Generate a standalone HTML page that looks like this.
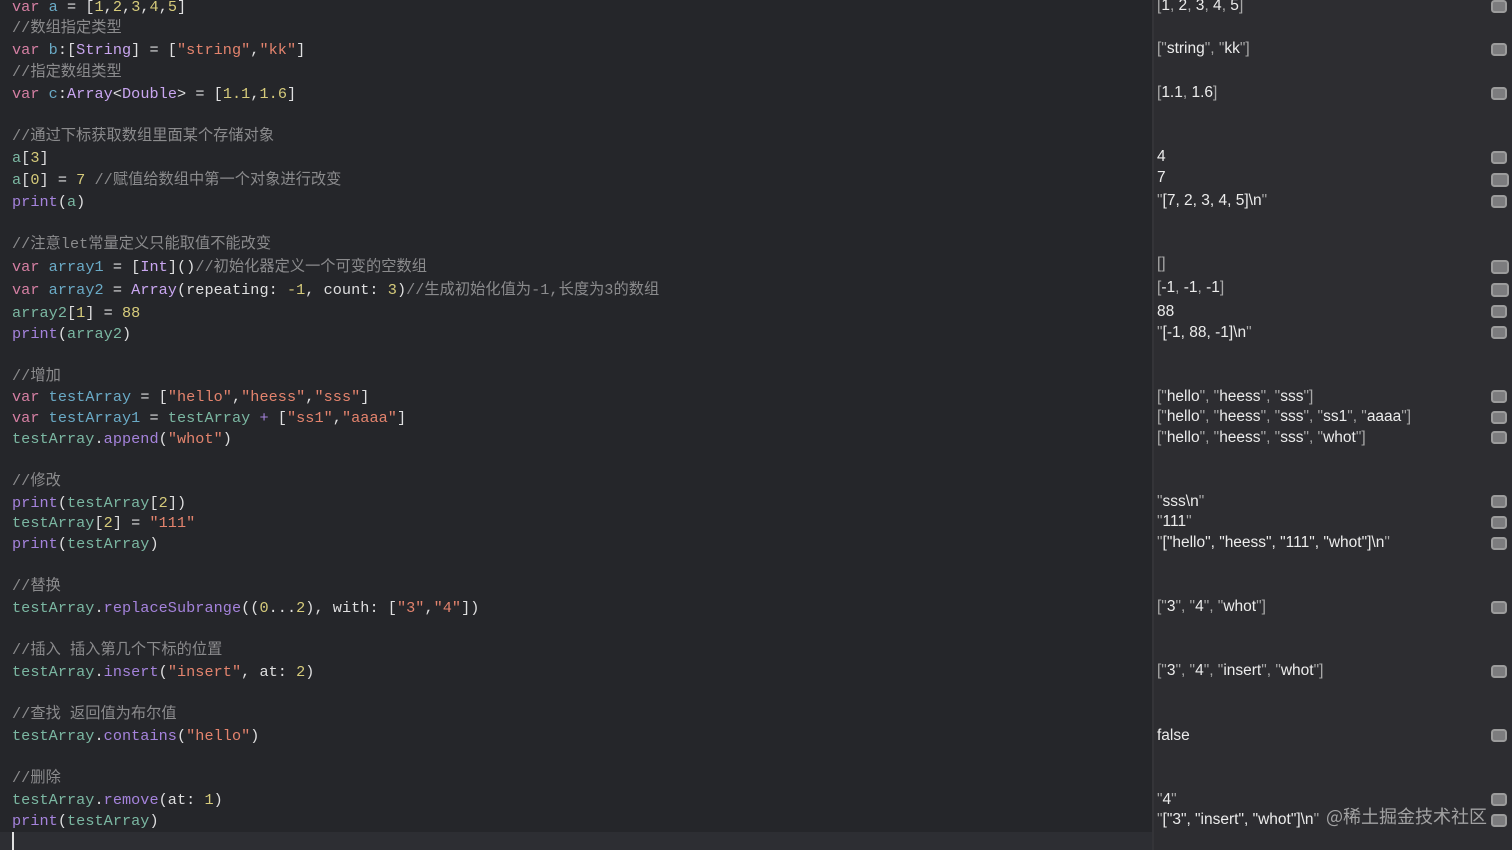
<!DOCTYPE html>
<html><head><meta charset="utf-8"><style>
html,body{margin:0;padding:0;width:1512px;height:850px;overflow:hidden;background:#25262a;}
#code{position:absolute;left:0;top:0;width:1152px;height:850px;background:#25262a;}
#cur{position:absolute;left:0;top:832px;width:1152px;height:18px;background:#2d2e33;}
#caret{position:absolute;left:12px;top:832px;width:1.5px;height:18px;background:#e0e0e0;}
#sep{position:absolute;left:1152px;top:0;width:2px;height:850px;background:#343438;}
#res{position:absolute;left:1154px;top:0;width:358px;height:850px;background:#2d2d31;}
.l{position:absolute;left:12px;height:22px;line-height:22px;white-space:pre;font-family:"Liberation Mono","Noto Sans CJK SC",monospace;font-size:15.2px;letter-spacing:0.05px;color:#dfdfe0;}
.c{color:#8b8b8d;}
.k{color:#d57fa3;}
.d{color:#6aaac6;}
.v{color:#7bb7a2;}
.m{color:#a583dc;}
.s{color:#e3836d;}
.n{color:#d6cb7b;}
.t{color:#c9a6f0;}
.r{position:absolute;left:1157px;height:22px;line-height:22px;white-space:pre;font-family:"Liberation Sans","Noto Sans CJK SC",sans-serif;font-size:15.5px;color:#ececec;}
.r i{font-style:normal;color:#a8a8a8;}
.ic{position:absolute;left:1491px;width:12px;height:9px;border:2px solid #9c9c9c;border-radius:3.5px;background:#7c7c7e;}
.wm{position:absolute;left:1326px;top:803px;font-family:"Noto Sans CJK SC",sans-serif;font-size:18px;color:rgba(200,200,200,0.75);white-space:pre;}
</style></head><body>
<div id="code"></div><div id="cur"></div><div id="caret"></div><div id="sep"></div><div id="res"></div>

<div class="l" style="top:-4px"><span class="k">var</span> <span class="d">a</span> = [<span class="n">1</span>,<span class="n">2</span>,<span class="n">3</span>,<span class="n">4</span>,<span class="n">5</span>]</div>
<div class="l c" style="top:17px">//数组指定类型</div>
<div class="l" style="top:39px"><span class="k">var</span> <span class="d">b</span>:[<span class="t">String</span>] = [<span class="s">"string"</span>,<span class="s">"kk"</span>]</div>
<div class="l c" style="top:61px">//指定数组类型</div>
<div class="l" style="top:83px"><span class="k">var</span> <span class="d">c</span>:<span class="t">Array</span>&lt;<span class="t">Double</span>&gt; = [<span class="n">1.1</span>,<span class="n">1.6</span>]</div>
<div class="l c" style="top:125px">//通过下标获取数组里面某个存储对象</div>
<div class="l" style="top:147px"><span class="v">a</span>[<span class="n">3</span>]</div>
<div class="l" style="top:169px"><span class="v">a</span>[<span class="n">0</span>] = <span class="n">7</span> <span class="c">//赋值给数组中第一个对象进行改变</span></div>
<div class="l" style="top:191px"><span class="m">print</span>(<span class="v">a</span>)</div>
<div class="l c" style="top:233px">//注意let常量定义只能取值不能改变</div>
<div class="l" style="top:256px"><span class="k">var</span> <span class="d">array1</span> = [<span class="t">Int</span>]()<span class="c">//初始化器定义一个可变的空数组</span></div>
<div class="l" style="top:279px"><span class="k">var</span> <span class="d">array2</span> = <span class="t">Array</span>(repeating: <span class="n">-1</span>, count: <span class="n">3</span>)<span class="c">//生成初始化值为-1,长度为3的数组</span></div>
<div class="l" style="top:302px"><span class="v">array2</span>[<span class="n">1</span>] = <span class="n">88</span></div>
<div class="l" style="top:323px"><span class="m">print</span>(<span class="v">array2</span>)</div>
<div class="l c" style="top:365px">//增加</div>
<div class="l" style="top:386px"><span class="k">var</span> <span class="d">testArray</span> = [<span class="s">"hello"</span>,<span class="s">"heess"</span>,<span class="s">"sss"</span>]</div>
<div class="l" style="top:407px"><span class="k">var</span> <span class="d">testArray1</span> = <span class="v">testArray</span> <span class="m">+</span> [<span class="s">"ss1"</span>,<span class="s">"aaaa"</span>]</div>
<div class="l" style="top:428px"><span class="v">testArray</span>.<span class="m">append</span>(<span class="s">"whot"</span>)</div>
<div class="l c" style="top:470px">//修改</div>
<div class="l" style="top:492px"><span class="m">print</span>(<span class="v">testArray</span>[<span class="n">2</span>])</div>
<div class="l" style="top:512px"><span class="v">testArray</span>[<span class="n">2</span>] = <span class="s">"111"</span></div>
<div class="l" style="top:533px"><span class="m">print</span>(<span class="v">testArray</span>)</div>
<div class="l c" style="top:575px">//替换</div>
<div class="l" style="top:597px"><span class="v">testArray</span>.<span class="m">replaceSubrange</span>((<span class="n">0</span>...<span class="n">2</span>), with: [<span class="s">"3"</span>,<span class="s">"4"</span>])</div>
<div class="l c" style="top:639px">//插入 插入第几个下标的位置</div>
<div class="l" style="top:661px"><span class="v">testArray</span>.<span class="m">insert</span>(<span class="s">"insert"</span>, at: <span class="n">2</span>)</div>
<div class="l c" style="top:703px">//查找 返回值为布尔值</div>
<div class="l" style="top:725px"><span class="v">testArray</span>.<span class="m">contains</span>(<span class="s">"hello"</span>)</div>
<div class="l c" style="top:767px">//删除</div>
<div class="l" style="top:789px"><span class="v">testArray</span>.<span class="m">remove</span>(at: <span class="n">1</span>)</div>
<div class="l" style="top:810px"><span class="m">print</span>(<span class="v">testArray</span>)</div>

<div class="r" style="top:-5px"><i>[</i>1<i>,</i> 2<i>,</i> 3<i>,</i> 4<i>,</i> 5<i>]</i></div>
<div class="r" style="top:38px"><i>["</i>string<i>", "</i>kk<i>"]</i></div>
<div class="r" style="top:82px"><i>[</i>1.1<i>,</i> 1.6<i>]</i></div>
<div class="r" style="top:146px">4</div>
<div class="r" style="top:167px">7</div>
<div class="r" style="top:190px"><i>"</i>[7, 2, 3, 4, 5]\n<i>"</i></div>
<div class="r" style="top:253px"><i>[]</i></div>
<div class="r" style="top:277px"><i>[</i>-1<i>,</i> -1<i>,</i> -1<i>]</i></div>
<div class="r" style="top:301px">88</div>
<div class="r" style="top:322px"><i>"</i>[-1, 88, -1]\n<i>"</i></div>
<div class="r" style="top:386px"><i>["</i>hello<i>", "</i>heess<i>", "</i>sss<i>"]</i></div>
<div class="r" style="top:406px"><i>["</i>hello<i>", "</i>heess<i>", "</i>sss<i>", "</i>ss1<i>", "</i>aaaa<i>"]</i></div>
<div class="r" style="top:427px"><i>["</i>hello<i>", "</i>heess<i>", "</i>sss<i>", "</i>whot<i>"]</i></div>
<div class="r" style="top:491px"><i>"</i>sss\n<i>"</i></div>
<div class="r" style="top:511px"><i>"</i>111<i>"</i></div>
<div class="r" style="top:532px"><i>"</i>["hello", "heess", "111", "whot"]\n<i>"</i></div>
<div class="r" style="top:596px"><i>["</i>3<i>", "</i>4<i>", "</i>whot<i>"]</i></div>
<div class="r" style="top:660px"><i>["</i>3<i>", "</i>4<i>", "</i>insert<i>", "</i>whot<i>"]</i></div>
<div class="r" style="top:725px">false</div>
<div class="r" style="top:789px"><i>"</i>4<i>"</i></div>
<div class="r" style="top:809px"><i>"</i>["3", "insert", "whot"]\n<i>"</i></div>
<div class="wm">@稀土掘金技术社区</div>

<div class="ic" style="top:0px"></div>
<div class="ic" style="top:43px"></div>
<div class="ic" style="top:87px"></div>
<div class="ic" style="top:151px"></div>
<div class="ic" style="top:173px;width:14px;height:10px"></div>
<div class="ic" style="top:195px"></div>
<div class="ic" style="top:260px;width:14px;height:10px"></div>
<div class="ic" style="top:283px;width:14px;height:10px"></div>
<div class="ic" style="top:305px"></div>
<div class="ic" style="top:326px"></div>
<div class="ic" style="top:390px"></div>
<div class="ic" style="top:411px"></div>
<div class="ic" style="top:431px"></div>
<div class="ic" style="top:495px"></div>
<div class="ic" style="top:516px"></div>
<div class="ic" style="top:537px"></div>
<div class="ic" style="top:601px"></div>
<div class="ic" style="top:665px"></div>
<div class="ic" style="top:729px"></div>
<div class="ic" style="top:793px"></div>
<div class="ic" style="top:814px"></div>
</body></html>
